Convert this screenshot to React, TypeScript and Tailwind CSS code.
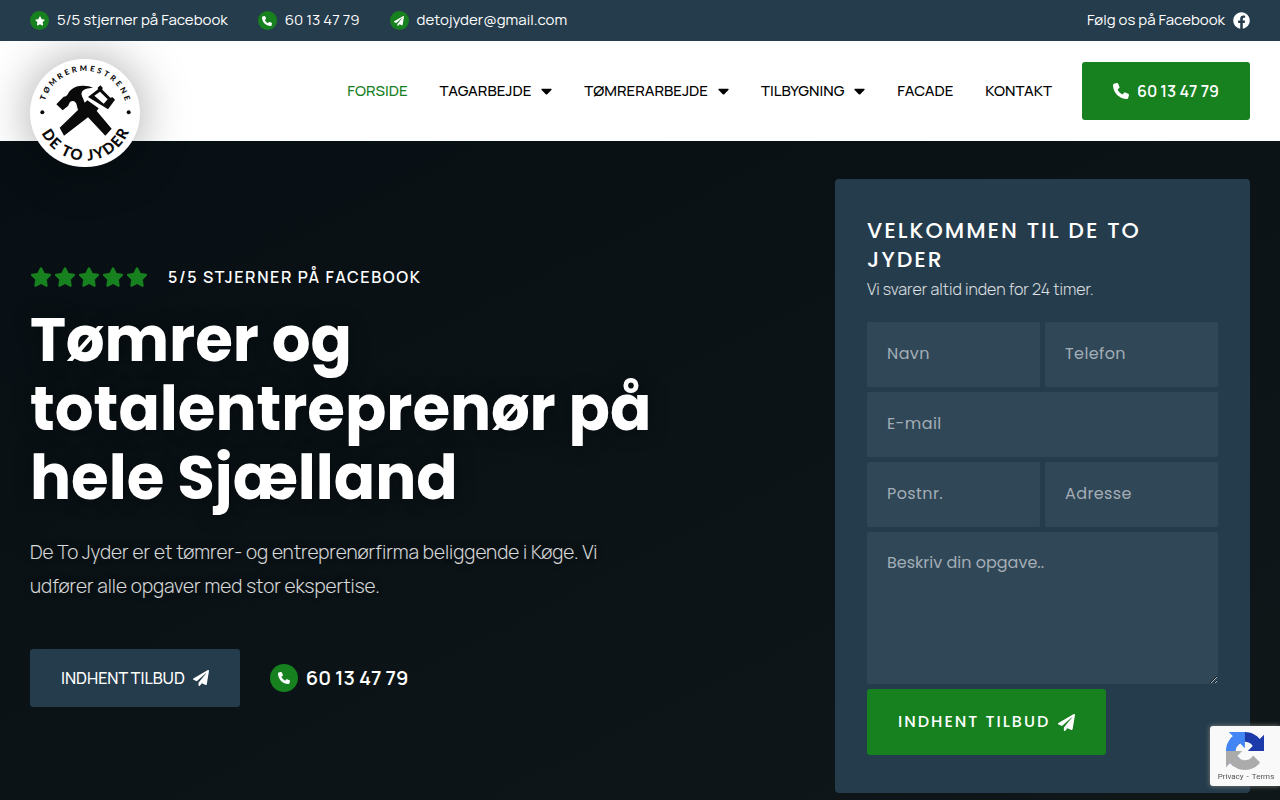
import type { ReactNode } from "react";
import { FaCaretDown, FaFacebook, FaPaperPlane } from "react-icons/fa";
import { FaPhone, FaStar } from "react-icons/fa6";

const topLinks: { label: string; href: string; icon: ReactNode }[] = [
  { label: "5/5 stjerner på Facebook", href: "#anmeldelser", icon: <FaStar /> },
  { label: "60 13 47 79", href: "tel:60134779", icon: <FaPhone /> },
  { label: "detojyder@gmail.com", href: "mailto:detojyder@gmail.com", icon: <FaPaperPlane /> },
];

const navItems = [
  { label: "FORSIDE", active: true },
  { label: "TAGARBEJDE", menu: true },
  { label: "TØMRERARBEJDE", menu: true },
  { label: "TILBYGNING", menu: true },
  { label: "FACADE" },
  { label: "KONTAKT" },
];

function Logo() {
  return (
    <svg viewBox="90 177 330 324" className="h-[108px] w-[110px]" role="img" aria-label="De To Jyder">
      <defs>
        <path id="logo-top" d="M129 339a126 126 0 0 1 252 0" />
        <path id="logo-bottom" d="M111 338a144 144 0 0 0 288 0" />
      </defs>
      <g fontFamily="Lato, sans-serif" fontWeight="900" fill="#0a0a0a" textAnchor="middle">
        <text fontSize="23" letterSpacing="8">
          <textPath href="#logo-top" startOffset="51%">TØMRERMESTRENE</textPath>
        </text>
        <text fontSize="45" letterSpacing="5">
          <textPath href="#logo-bottom" startOffset="51%">DE TO JYDER</textPath>
        </text>
      </g>
      <g fill="#0a0a0a">
        <circle cx="127" cy="337" r="6" />
        <circle cx="386" cy="337" r="6" />
        <path d="M169 313L191 290C197 289 201 287 204 281C211 266 229 256 250 257C262 257 272 259 279 263C262 264 250 268 246 275C243 281 245 287 249 295L254 308L262 301L296 325L290 333L335 386L316 407L264 352L192 407L179 383L234 330L229 311C224 301 216 302 210 306L204 318L188 331Z" />
        <path
          fillRule="evenodd"
          d="M301 256L308 263L307 269L331 293L338 292L345 299L324 328L264 291L294 268L293 263ZM300 275L283 287L311 311L323 298Z"
        />
      </g>
    </svg>
  );
}

function RecaptchaMark() {
  return (
    <svg viewBox="0 0 64 64" className="size-[38px]" aria-hidden="true">
      <path fill="#1c3aa9" d="M64 31.955l-.033-1.37V4.687l-7.16 7.16C50.948 4.674 42.033.093 32.05.093c-10.4 0-19.622 4.96-25.458 12.64l11.736 11.86a15.55 15.55 0 0 1 4.754-5.334c2.05-1.6 4.952-2.906 8.968-2.906.485 0 .86.057 1.135.163 4.976.393 9.288 3.14 11.828 7.124l-8.307 8.307L64 31.953" />
      <path fill="#4285f4" d="M31.862.094l-1.37.033H4.594l7.16 7.16C4.58 13.147 0 22.06 0 32.046c0 10.4 4.96 19.622 12.64 25.458L24.5 45.768a15.55 15.55 0 0 1-5.334-4.754c-1.6-2.05-2.906-4.952-2.906-8.968 0-.485.057-.86.163-1.135.393-4.976 3.14-9.288 7.124-11.828l8.307 8.307L31.86.095" />
      <path fill="#ababab" d="M.001 32.045l.033 1.37v25.898l7.16-7.16c5.86 7.173 14.774 11.754 24.76 11.754 10.4 0 19.622-4.96 25.458-12.64l-11.736-11.86a15.55 15.55 0 0 1-4.754 5.334c-2.05 1.6-4.952 2.906-8.968 2.906-.485 0-.86-.057-1.135-.163-4.976-.393-9.288-3.14-11.828-7.124l8.307-8.307c-10.522.04-22.4.066-27.295-.005" />
    </svg>
  );
}

const fieldClass =
  "block w-full min-w-0 rounded-xs bg-[#304757] px-5 text-base text-white placeholder:text-[#a3adb5] focus:outline-1 focus:outline-white/40";

function Field({ label, type = "text", wide = false }: { label: string; type?: string; wide?: boolean }) {
  return (
    <div className={wide ? "col-span-2" : ""}>
      <input type={type} aria-label={label} placeholder={label} className={`${fieldClass} h-[65px] pb-[2px] tracking-wide`} />
    </div>
  );
}

export default function App() {
  return (
    <div className="flex min-h-screen flex-col bg-[#0b1216] font-['Manrope','Inter',sans-serif] text-white">
      <div className="relative z-20 flex h-[41px] items-center justify-between bg-[#253c4c] px-[30px] text-[15px]">
        <ul className="flex items-center gap-[30px]">
          {topLinks.map((link) => (
            <li key={link.label}>
              <a href={link.href} className="flex items-center gap-2">
                <span className="flex size-[19px] items-center justify-center rounded-full bg-[#17801f] text-[10px]">{link.icon}</span>
                {link.label}
              </a>
            </li>
          ))}
        </ul>
        <a href="#facebook" className="flex items-center gap-2">
          Følg os på Facebook
          <FaFacebook className="size-[17px]" />
        </a>
      </div>

      <header className="relative z-10 flex h-[100px] items-center justify-between bg-white px-[30px] text-black">
        <a href="#forside" className="mt-[43px] rounded-full bg-white shadow-[0_0_50px_rgba(0,0,0,0.35)]">
          <Logo />
        </a>
        <div className="flex items-center gap-[30px]">
          <nav className="flex items-center gap-8 text-[15px] font-medium">
            {navItems.map((item) => (
              <a key={item.label} href={`#${item.label.toLowerCase()}`} className={item.active ? "text-[#17801f]" : "flex items-center gap-[10px]"}>
                {item.label}
                {item.menu && <FaCaretDown className="h-[18px] w-[11px]" />}
              </a>
            ))}
          </nav>
          <a href="tel:60134779" className="flex h-[58px] items-center gap-2 rounded-[3px] bg-[#17801f] px-[31px] text-base font-semibold text-white">
            <FaPhone className="size-4" />
            60 13 47 79
          </a>
        </div>
      </header>

      <main className="flex flex-1 items-center justify-between bg-linear-to-br from-[#070f14] to-[#101719] px-[30px] pt-[38px] pb-[7px]">
        <section className="w-[640px]">
          <div className="flex items-center gap-5">
            <div className="flex gap-[2px] text-[22px] text-[#17801f]" role="img" aria-label="5 ud af 5 stjerner">
              {[1, 2, 3, 4, 5].map((n) => (
                <FaStar key={n} />
              ))}
            </div>
            <p className="text-base font-semibold tracking-widest">5/5 STJERNER PÅ FACEBOOK</p>
          </div>
          <h1 className="mt-4 font-['Poppins','Inter',sans-serif] text-[61px] leading-[69px] font-bold text-shadow-[0_0_20px_rgba(0,0,0,0.4)]">
            Tømrer og totalentreprenør på hele Sjælland
          </h1>
          <p className="mt-[23px] max-w-[600px] text-[19px] leading-[34px] font-light text-white/85 text-shadow-[0_0_10px_rgba(0,0,0,0.3)]">
            De To Jyder er et tømrer- og entreprenørfirma beliggende i Køge. Vi udfører alle opgaver med stor ekspertise.
          </p>
          <div className="mt-[46px] flex items-center gap-[30px]">
            <a href="#tilbud" className="flex h-[58px] items-center gap-2 rounded-[3px] bg-[#253c4c] px-[31px] text-base font-medium">
              INDHENT TILBUD
              <FaPaperPlane className="size-4" />
            </a>
            <a href="tel:60134779" className="flex items-center gap-2 text-xl font-semibold">
              <span className="flex size-7 items-center justify-center rounded-full bg-[#17801f] text-xs">
                <FaPhone />
              </span>
              60 13 47 79
            </a>
          </div>
        </section>

        <section id="tilbud" className="w-[415px] rounded-[4px] bg-[#253c4c] px-8 pt-[37px] pb-[38px]">
          <h2 className="font-['Poppins','Inter',sans-serif] text-[22px] leading-[29px] font-medium tracking-[2px]">VELKOMMEN TIL DE TO JYDER</h2>
          <p className="text-base leading-[30px] font-light text-white/85">Vi svarer altid inden for 24 timer.</p>
          <form className="mt-[18px] grid grid-cols-2 gap-[5px] font-['Poppins','Inter',sans-serif]" onSubmit={(event) => event.preventDefault()}>
            <Field label="Navn" />
            <Field label="Telefon" type="tel" />
            <Field label="E-mail" type="email" wide />
            <Field label="Postnr." />
            <Field label="Adresse" />
            <div className="col-span-2">
              <textarea aria-label="Beskriv din opgave.." placeholder="Beskriv din opgave.." className={`${fieldClass} h-[152px] resize-y pt-[19px]`} />
            </div>
            <button type="submit" className="col-span-2 flex h-[66px] items-center justify-center gap-2 justify-self-start rounded-[3px] bg-[#17801f] px-[31px] text-base font-medium tracking-[2px]">
              INDHENT TILBUD
              <FaPaperPlane className="size-[17px]" />
            </button>
          </form>
        </section>
      </main>

      <aside className="fixed right-0 bottom-[14px] z-30 flex h-[60px] w-[70px] flex-col items-center justify-end rounded-l-[3px] bg-[#f9f9f9] pb-[2px] shadow-[0_0_5px_gray]">
        <RecaptchaMark />
        <p className="flex gap-[3px] pl-[2px] font-[Roboto,sans-serif] text-[8px] leading-[14px] text-[#555]">
          <a href="#privacy">Privacy</a>
          <span>-</span>
          <a href="#terms">Terms</a>
        </p>
      </aside>
    </div>
  );
}
